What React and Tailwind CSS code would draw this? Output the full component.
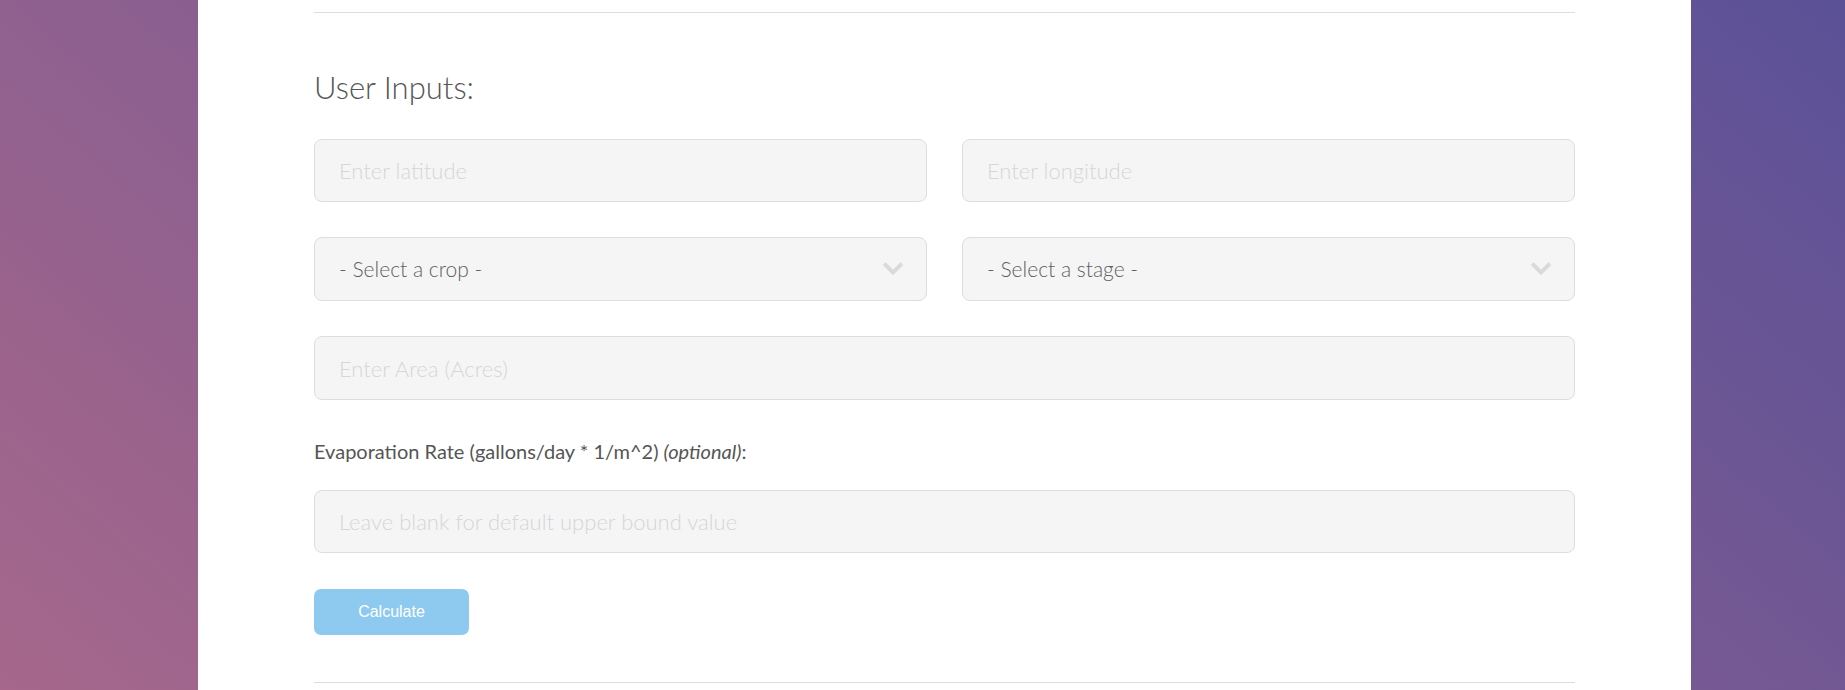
import React from "react";

const font = { fontFamily: "Lato, 'Noto Sans', sans-serif" };

const Field = ({ placeholder, className = "" }) => (
  <input
    type="text"
    placeholder={placeholder}
    className={`h-[63px] w-full rounded-[8px] border border-[#dddddd] bg-[#f5f5f5] px-[24px] text-[22px] font-light text-[#555] placeholder:text-[#d6d6d6] focus:outline-none ${className}`}
  />
);

const Select = ({ label }) => (
  <div className="flex h-[64px] w-full items-center justify-between rounded-[8px] border border-[#dddddd] bg-[#f5f5f5] pl-[24px] pr-[23px]">
    <span className="text-[21px] font-light text-[#5f5f5f]">{label}</span>
    <svg width="20" height="14" viewBox="0 0 20 14" fill="none">
      <path
        d="M2.5 3l7.5 7.5L17.5 3"
        stroke="#dadada"
        strokeWidth="4"
        strokeLinecap="square"
      />
    </svg>
  </div>
);

export default function App() {
  return (
    <div
      className="flex h-[690px] w-full overflow-hidden bg-[linear-gradient(41deg,#a6678b,#5b5197)]"
      style={font}
    >
      <div className="ml-[198px] w-[1493px] bg-white px-[116px] pt-[12px]">
        <div className="h-px bg-[#dddddd]" />
        <h2 className="mt-[54px] text-[31px] font-light leading-[40px] text-[#555]">
          User Inputs:
        </h2>
        <div className="mt-[32px] grid grid-cols-2 gap-x-[35px] gap-y-[35px]">
          <Field placeholder="Enter latitude" />
          <Field placeholder="Enter longitude" />
          <Select label="- Select a crop -" />
          <Select label="- Select a stage -" />
        </div>
        <div className="mt-[35px]">
          <Field placeholder="Enter Area (Acres)" className="h-[64px]" />
        </div>
        <p className="mt-[38px] text-[20px] leading-[26px] text-[#555]">
          Evaporation Rate (gallons/day * 1/m^2) <em>(optional)</em>:
        </p>
        <div className="mt-[26px]">
          <Field placeholder="Leave blank for default upper bound value" />
        </div>
        <button
          className="mt-[36px] h-[46px] w-[155px] rounded-[7px] bg-[#8ecaf0] text-[16px] text-white"
          style={{ fontFamily: "'Liberation Sans', Arial, sans-serif" }}
        >
          Calculate
        </button>
        <div className="mt-[47px] h-px bg-[#dddddd]" />
      </div>
    </div>
  );
}
